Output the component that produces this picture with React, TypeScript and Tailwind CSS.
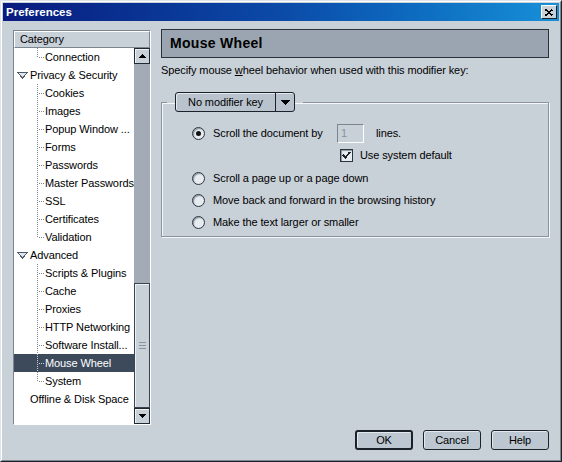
import React from "react";

type Row = { label: string; kind: "child" | "parent" | "top"; last?: boolean; selected?: boolean };

const rows: Row[] = [
  { label: "Connection", kind: "child", last: true },
  { label: "Privacy & Security", kind: "parent" },
  { label: "Cookies", kind: "child" },
  { label: "Images", kind: "child" },
  { label: "Popup Window ...", kind: "child" },
  { label: "Forms", kind: "child" },
  { label: "Passwords", kind: "child" },
  { label: "Master Passwords", kind: "child" },
  { label: "SSL", kind: "child" },
  { label: "Certificates", kind: "child" },
  { label: "Validation", kind: "child", last: true },
  { label: "Advanced", kind: "parent" },
  { label: "Scripts & Plugins", kind: "child" },
  { label: "Cache", kind: "child" },
  { label: "Proxies", kind: "child" },
  { label: "HTTP Networking", kind: "child" },
  { label: "Software Install...", kind: "child" },
  { label: "Mouse Wheel", kind: "child", selected: true },
  { label: "System", kind: "child", last: true },
  { label: "Offline & Disk Space", kind: "top" },
];

function Connector({ last, light }: { last?: boolean; light?: boolean }) {
  const c = light ? "#c8d0d8" : "#808890";
  return (
    <svg width="7" height="18" className="shrink-0" shapeRendering="crispEdges">
      <line x1="0.5" y1="0" x2="0.5" y2={last ? 10 : 18} stroke={c} strokeDasharray="1 1" />
      <line x1="2" y1="9.5" x2="7" y2="9.5" stroke={c} strokeDasharray="1 1" />
    </svg>
  );
}

function Triangle() {
  return (
    <svg width="11" height="7" className="shrink-0" shapeRendering="crispEdges">
      <polygon points="0.5,0.5 10.5,0.5 5.5,6" fill="#dfe5ea" stroke="#505a66" strokeWidth="1" />
    </svg>
  );
}

function TreeRow({ r }: { r: Row }) {
  const base = "h-[18px] flex items-center whitespace-nowrap";
  if (r.kind === "child") {
    return (
      <div className={`${base} pl-[23px] ${r.selected ? "bg-[#3d4a5c] text-white" : "text-black"}`}>
        <Connector last={r.last} light={r.selected} />
        <span className="ml-[1px]">{r.label}</span>
      </div>
    );
  }
  if (r.kind === "parent") {
    return (
      <div className={`${base} pl-[3px] gap-[2px] text-black`}>
        <Triangle />
        <span>{r.label}</span>
      </div>
    );
  }
  return <div className={`${base} pl-[16px] text-black`}>{r.label}</div>;
}

function ArrowBtn({ up }: { up?: boolean }) {
  return (
    <div className="h-[16px] w-[16px] shrink-0 bg-[#c8d0d8] border border-[#202830] shadow-[inset_1px_1px_0_#eef1f4] flex items-center justify-center">
      <svg width="7" height="4" shapeRendering="crispEdges">
        {up ? <polygon points="3.5,0 7,4 0,4" fill="#000" /> : <polygon points="0,0 7,0 3.5,4" fill="#000" />}
      </svg>
    </div>
  );
}

function Radio({ checked }: { checked?: boolean }) {
  return (
    <span className="w-[13px] h-[13px] shrink-0 rounded-full border border-[#2c343e] bg-[#e6ecf0] shadow-[inset_1px_1px_1px_#8a94a0] flex items-center justify-center">
      {checked && <span className="w-[5px] h-[5px] rounded-full bg-[#111]" />}
    </span>
  );
}

function Btn({ label, def }: { label: string; def?: boolean }) {
  return (
    <div
      className={`w-[58px] h-[20px] rounded-[3px] ${def ? "border-2" : "border"} border-[#1c222a] bg-[#bdc7d1] shadow-[inset_1px_1px_0_#e4e9ee] flex items-center justify-center text-black`}
    >
      {label}
    </div>
  );
}

export default function App() {
  return (
    <div className="w-[562px] h-[462px] bg-[#c8d0d8] border border-t-[#dfe4ea] border-l-[#dfe4ea] border-r-[#1c2228] border-b-[#1c2228] font-['Liberation_Sans',Arial,sans-serif] text-[11px] leading-[13px] tracking-[-0.1px] text-black">
      <div className="h-full border border-t-white border-l-white border-r-[#7c8590] border-b-[#7c8590] p-[1px] flex flex-col">
        {/* title bar */}
        <div className="h-[18px] shrink-0 bg-gradient-to-r from-[#0a1a7e] via-[#0c4aa8] to-[#1890d8] flex items-center justify-between pl-[3px] pr-[2px]">
          <span className="text-white font-bold text-[11.5px] tracking-normal">Preferences</span>
          <div className="w-[16px] h-[14px] bg-[#c8d0d8] border border-t-white border-l-white border-r-[#1c2228] border-b-[#1c2228] flex items-center justify-center">
            <svg width="8" height="7" shapeRendering="crispEdges">
              <path d="M0.5 0.5 L7.5 6.5 M7.5 0.5 L0.5 6.5" stroke="#000" strokeWidth="1.6" />
            </svg>
          </div>
        </div>

        {/* body */}
        <div className="flex-1 flex pl-[10px] pt-[8px] gap-[10px]">
          {/* left category panel */}
          <div className="mt-[1px] w-[138px] h-[395px] border border-t-[#7c8490] border-l-[#7c8490] border-r-white border-b-white flex flex-col">
            <div className="h-[17px] shrink-0 bg-[#c8d0d8] border border-t-white border-l-white border-r-[#7c8490] border-b-[#7c8490] flex items-center pl-[5px]">
              Category
            </div>
            <div className="flex-1 flex bg-white">
              <div className="w-[120px] flex flex-col">
                {rows.map((r) => (
                  <TreeRow key={r.label} r={r} />
                ))}
              </div>
              <div className="w-[16px] flex flex-col bg-[#a3acb6]">
                <ArrowBtn up />
                <div className="flex-1" />
                <div className="h-[125px] shrink-0 bg-[#c8d0d8] border border-[#3a4350] shadow-[inset_1px_1px_0_#eef1f4] flex flex-col items-center justify-center gap-[2px]">
                  <div className="w-[7px] h-[1px] bg-[#8a94a0]" />
                  <div className="w-[7px] h-[1px] bg-[#8a94a0]" />
                  <div className="w-[7px] h-[1px] bg-[#8a94a0]" />
                </div>
                <ArrowBtn />
              </div>
            </div>
          </div>

          {/* right panel */}
          <div className="w-[388px] h-[421px] flex flex-col">
            <div className="h-[29px] shrink-0 border border-[#2a323c] bg-[#9aa5b1] flex items-center px-[8px]">
              <span className="font-bold text-[14px] tracking-[0.3px]">Mouse Wheel</span>
            </div>
            <div className="mt-[6px] h-[13px]">
              Specify mouse <u>w</u>heel behavior when used with this modifier key:
            </div>

            <fieldset className="mt-[15px] border border-[#8a94a0] shadow-[inset_1px_1px_0_#f4f6f8,1px_1px_0_#f4f6f8] px-[5px] pb-[6px] m-0">
              <legend className="px-[8px]">
                <div className="flex h-[20px] w-[120px] rounded-[3px] border border-[#1c222a] bg-[#b9c3cd] shadow-[inset_1px_1px_0_#e4e9ee]">
                  <div className="flex-1 flex items-center justify-center">No modifier key</div>
                  <div className="w-[19px] border-l border-[#1c222a] flex items-center justify-center">
                    <svg width="9" height="5" shapeRendering="crispEdges">
                      <polygon points="0,0 9,0 4.5,5" fill="#000" />
                    </svg>
                  </div>
                </div>
              </legend>

              <div className="pl-[25px] pt-[12px] flex flex-col">
                <div className="h-[19px] flex items-center">
                  <Radio checked />
                  <span className="ml-[8px] w-[124px]">Scroll the document by</span>
                  <div className="w-[27px] h-[19px] border border-t-[#7c8490] border-l-[#7c8490] border-r-white border-b-white bg-[#c8d0d8] flex items-center pl-[3px] text-[#8a929c]">
                    1
                  </div>
                  <span className="ml-[12px]">lines.</span>
                </div>
                <div className="mt-[5px] h-[14px] flex items-center pl-[148px]">
                  <span className="w-[13px] h-[13px] border border-[#2c343e] bg-[#e6ecf0] shadow-[inset_1px_1px_1px_#8a94a0] flex items-center justify-center">
                    <svg width="9" height="8" shapeRendering="crispEdges">
                      <path d="M1 4 L3.5 6.5 L8 1" stroke="#1c222a" strokeWidth="1.8" fill="none" />
                    </svg>
                  </span>
                  <span className="ml-[7px]">Use system default</span>
                </div>
                <div className="mt-[8px] h-[16px] flex items-center">
                  <Radio />
                  <span className="ml-[8px]">Scroll a page up or a page down</span>
                </div>
                <div className="mt-[6px] h-[16px] flex items-center">
                  <Radio />
                  <span className="ml-[8px]">Move back and forward in the browsing history</span>
                </div>
                <div className="mt-[6px] h-[16px] flex items-center">
                  <Radio />
                  <span className="ml-[8px]">Make the text larger or smaller</span>
                </div>
              </div>
            </fieldset>

            <div className="mt-auto flex justify-end gap-[10px]">
              <Btn label="OK" def />
              <Btn label="Cancel" />
              <Btn label="Help" />
            </div>
          </div>
        </div>
      </div>
    </div>
  );
}
